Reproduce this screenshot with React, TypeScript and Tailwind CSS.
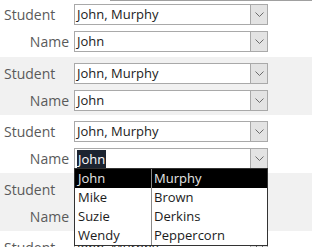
import React from "react";

type Student = { first: string; last: string };

const students: Student[] = [
  { first: "John", last: "Murphy" },
  { first: "Mike", last: "Brown" },
  { first: "Suzie", last: "Derkins" },
  { first: "Wendy", last: "Peppercorn" },
];

const Chevron: React.FC = () => (
  <svg width="9" height="5" viewBox="0 0 9 5" fill="none">
    <path d="M0.5 0.5 L4.5 4.5 L8.5 0.5" stroke="#6b6b6b" strokeWidth="1" />
  </svg>
);

const Combo: React.FC<{ value: string; selected?: boolean; open?: boolean }> = ({
  value,
  selected,
  open,
}) => (
  <div className="relative flex h-[21px] w-[194px] border border-[#a9a9a9] bg-white">
    <div className="flex flex-1 items-center pl-[2px] text-[13px] text-[#1b1b1b]">
      {selected ? (
        <span className="bg-[#1c2430] px-[1px] leading-[18px] text-white">{value}</span>
      ) : (
        <span>{value}</span>
      )}
    </div>
    <div className="flex w-[17px] items-center justify-center border-l border-[#a9a9a9] bg-[#e3e3e3]">
      <Chevron />
    </div>

    {/* Dropdown list */}
    {open && (
      <div className="absolute left-[-1px] top-[19px] z-10 w-[194px] border border-[#333] bg-white text-[13px] text-[#1b1b1b]">
        {students.map((s, idx) => (
          <div
            key={s.first}
            className={
              idx === 0
                ? "flex h-[19px] items-center bg-black text-[#e6e6e6]"
                : "flex h-[19px] items-center"
            }
          >
            <div className="w-[77px] border-r border-[#8a8a8a] pl-[3px]">{s.first}</div>
            <div className="pl-[2px]">{s.last}</div>
          </div>
        ))}
      </div>
    )}
  </div>
);

const Record: React.FC<{
  shaded?: boolean;
  selected?: boolean;
  className: string;
}> = ({ shaded, selected, className }) => (
  <div className={`${shaded ? "bg-[#f1f1f1]" : "bg-white"} ${className} flex flex-col gap-[6px]`}>
    <div className="flex items-center">
      <div className="w-[74px] pl-[4px] text-[14px] text-[#5a5a5a]">Student</div>
      <Combo value="John, Murphy" />
    </div>
    <div className="flex items-center">
      <div className="w-[74px] pr-[5px] text-right text-[14px] text-[#5a5a5a]">Name</div>
      <Combo value="John" selected={selected} open={selected} />
    </div>
  </div>
);

export default function App() {
  return (
    <div
      className="h-[247px] w-[312px] overflow-hidden bg-white"
      style={{ fontFamily: '"Open Sans", "Noto Sans", sans-serif' }}
    >
      <div className="ml-[110px] h-px bg-[#a0a0a0]" />
      <Record className="h-[56px] pt-[3px]" />
      <Record shaded className="h-[58px] pt-[6px]" />
      <Record selected className="h-[58px] pt-[6px]" />
      <Record shaded className="h-[58px] pt-[6px]" />
      <Record className="h-[58px] pt-[6px]" />
    </div>
  );
}
